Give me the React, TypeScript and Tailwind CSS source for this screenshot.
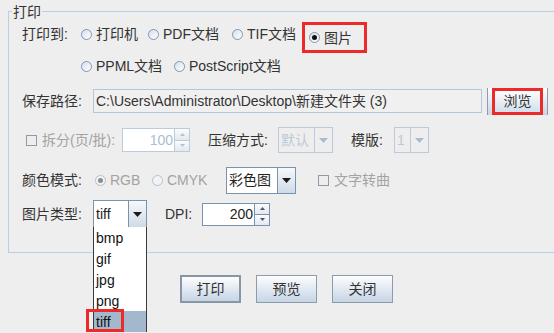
import clsx from "clsx";

const RED = "border-[#ec2a2a]";

function Radio({
  label,
  checked,
  disabled,
  className,
}: {
  label: string;
  checked?: boolean;
  disabled?: boolean;
  className?: string;
}) {
  return (
    <div className={clsx("flex items-center gap-[4px] shrink-0", className)}>
      <span
        className={clsx(
          "w-[11px] h-[11px] rounded-full border flex items-center justify-center shrink-0",
          disabled
            ? "border-[#b3c0cd] bg-[#f1f3f5]"
            : "border-[#7f97ae] bg-gradient-to-br from-[#d5e0eb] to-white",
        )}
      >
        {checked && (
          <span
            className={clsx(
              "w-[5px] h-[5px] rounded-full",
              disabled ? "bg-[#8d8d8d]" : "bg-[#111]",
            )}
          />
        )}
      </span>
      <span className={disabled ? "text-[#a3a3a3]" : "text-[#333]"}>{label}</span>
    </div>
  );
}

function Check({ label, className }: { label: string; className?: string }) {
  return (
    <div className={clsx("flex items-center gap-[5px] shrink-0", className)}>
      <span className="w-[11px] h-[11px] border border-[#8e9aa8] bg-[#eeeeee] shrink-0" />
      <span className="text-[#a3a3a3]">{label}</span>
    </div>
  );
}

function Arrow({ color }: { color: string }) {
  return (
    <svg width="9" height="5" viewBox="0 0 9 5">
      <polygon points="0,0 9,0 4.5,5" fill={color} />
    </svg>
  );
}

function Combo({
  text,
  className,
  disabled,
  children,
}: {
  text: string;
  className: string;
  disabled?: boolean;
  children?: React.ReactNode;
}) {
  return (
    <div
      className={clsx(
        "relative flex border shrink-0",
        disabled ? "border-[#bccbda]" : "border-[#7a93ad]",
        className,
      )}
    >
      <div
        className={clsx(
          "flex-1 flex items-center pl-[2px]",
          disabled ? "bg-[#eeeeee] text-[#bccad8] border-r border-[#bccbda]" : "bg-white text-[#222] border-r border-[#7a93ad]",
        )}
      >
        {text}
      </div>
      <div
        className={clsx(
          "w-[17px] flex items-center justify-center",
          disabled ? "bg-[#eeeeee]" : "bg-gradient-to-b from-[#f6f8fb] to-[#cfdbe8]",
        )}
      >
        <Arrow color={disabled ? "#a9bdd1" : "#1a1a1a"} />
      </div>
      {children}
    </div>
  );
}

function Spinner({
  value,
  disabled,
  className,
}: {
  value: string;
  disabled?: boolean;
  className: string;
}) {
  const bd = disabled ? "border-[#bccbda]" : "border-[#7a93ad]";
  return (
    <div className={clsx("flex w-[68px] shrink-0", className)}>
      <div
        className={clsx(
          "flex-1 border bg-white flex items-center justify-end pr-[1px]",
          bd,
          disabled ? "text-[#a9bdd3]" : "text-[#222]",
        )}
      >
        {value}
      </div>
      <div className={clsx("w-[15px] flex flex-col border border-l-0", bd)}>
        {[0, 1].map((i) => (
          <div
            key={i}
            className={clsx(
              "flex-1 flex items-center justify-center bg-gradient-to-b from-[#fbfcfd] to-[#e2e9f0]",
              i === 0 && "border-b",
              bd,
            )}
          >
            <svg width="5" height="3" viewBox="0 0 5 3">
              <polygon
                points={i === 0 ? "0,3 5,3 2.5,0" : "0,0 5,0 2.5,3"}
                fill={disabled ? "#b5c3d1" : "#555"}
              />
            </svg>
          </div>
        ))}
      </div>
    </div>
  );
}

function Btn({ label, focused }: { label: string; focused?: boolean }) {
  return (
    <button
      className={clsx(
        "w-[61px] h-[28px] flex items-center justify-center text-[#333] bg-gradient-to-b from-[#fdfdfe] to-[#c6d5e5]",
        focused ? "border-2 border-[#8797a8]" : "border border-[#8d9cad]",
      )}
    >
      {label}
    </button>
  );
}

export default function App() {
  return (
    <div className="w-[554px] h-[333px] overflow-hidden bg-[#eeeeee] text-[14px] leading-[16px] text-[#333] [font-family:'Liberation_Sans','Noto_Sans_CJK_SC',sans-serif]">
      <div className="pt-[11px] pl-2">
        <div className="h-[242px] border-t border-l border-b border-[#b9cfe4] pl-[13px]">
          {/* group title */}
          <div className="-mt-[8px] -ml-[10px] w-fit px-[1px] bg-[#eeeeee] h-[16px]">打印</div>

          {/* 打印到 */}
          <div className="flex items-center h-[28px]">
            <span className="w-[59px] shrink-0">打印到:</span>
            <Radio label="打印机" className="w-[67px]" />
            <Radio label="PDF文档" className="w-[84px]" />
            <Radio label="TIF文档" className="w-[70px]" />
            <div className={clsx("self-start mt-[2px] h-[31px] w-[65px] border-[3px] flex items-center pl-[4px]", RED)}>
              <Radio label="图片" checked />
            </div>
          </div>
          <div className="flex items-center h-[28px] mt-[4px] pl-[59px]">
            <Radio label="PPML文档" className="w-[93px]" />
            <Radio label="PostScript文档" />
          </div>

          {/* 保存路径 */}
          <div className="flex items-center h-[28px] mt-[7px]">
            <span className="w-[71px] shrink-0">保存路径:</span>
            <div className="w-[389px] h-[24px] border border-[#b3c8dc] bg-[#f0f0f0] flex items-center pl-[2px] text-[#333] shrink-0">
              C:\Users\Administrator\Desktop\新建文件夹 (3)
            </div>
            <div className="ml-[5px] w-[61px] h-[27px] flex border-x border-[#8d9cad] px-[4px] bg-gradient-to-b from-[#fdfdfe] to-[#c6d5e5] shrink-0">
              <span className={clsx("flex-1 border-[3px] flex items-center justify-center bg-gradient-to-b from-[#fdfdfe] to-[#d3dfeb]", RED)}>
                浏览
              </span>
            </div>
          </div>

          {/* 拆分 / 压缩方式 / 模版 */}
          <div className="flex items-center h-[28px] mt-[11px]">
            <Check label="拆分(页/批):" className="ml-[4px] w-[96px]" />
            <Spinner value="100" disabled className="h-[24px]" />
            <span className="ml-[18px] w-[70px] shrink-0">压缩方式:</span>
            <Combo text="默认" disabled className="w-[55px] h-[26px]" />
            <span className="ml-[18px] w-[43px] shrink-0">模版:</span>
            <Combo text="1" disabled className="w-[35px] h-[26px]" />
          </div>

          {/* 颜色模式 */}
          <div className="flex items-center h-[28px] mt-[12px]">
            <span className="w-[73px] shrink-0">颜色模式:</span>
            <Radio label="RGB" checked disabled className="w-[57px]" />
            <Radio label="CMYK" disabled className="w-[74px]" />
            <Combo text="彩色图" className="w-[70px] h-[27px]" />
            <Check label="文字转曲" className="ml-[22px]" />
          </div>

          {/* 图片类型 */}
          <div className="flex items-center h-[28px] mt-[6px]">
            <span className="w-[71px] shrink-0">图片类型:</span>
            <Combo text="tiff" className="w-[54px] h-[28px]">
              <div className="absolute left-[-1px] top-full w-[54px] bg-white border-x border-[#3a3a3a] z-10 text-[#111]">
                {["bmp", "gif", "jpg", "png", "tiff"].map((t) => (
                  <div
                    key={t}
                    className={clsx(
                      "h-[21px] flex items-center pl-[2px]",
                      t === "tiff" && "bg-[#a3b8cc]",
                    )}
                  >
                    {t}
                  </div>
                ))}
                <div className={clsx("absolute left-[-8px] top-[82px] w-[38px] h-[23px] border-[3px]", RED)} />
              </div>
            </Combo>
            <span className="ml-[18px] w-[37px] shrink-0">DPI:</span>
            <Spinner value="200" className="h-[23px]" />
          </div>
        </div>
      </div>

      {/* buttons */}
      <div className="flex gap-[15px] mt-[22px] pl-[180px]">
        <Btn label="打印" focused />
        <Btn label="预览" />
        <Btn label="关闭" />
      </div>
    </div>
  );
}
